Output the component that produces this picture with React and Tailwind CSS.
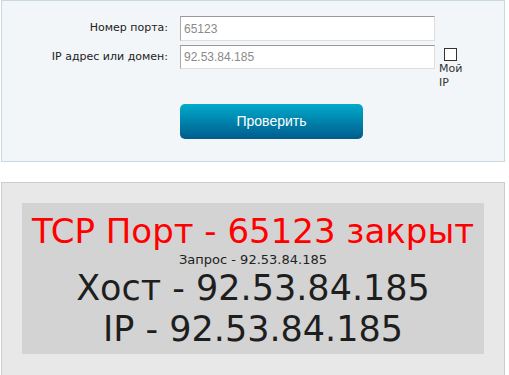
import React, { useState } from "react";

const Portcheck = () => {
  const [port, setPort] = useState("65123");
  const [host, setHost] = useState("92.53.84.185");
  const [myIp, setMyIp] = useState(false);

  return (
    <div className="w-[509px] h-[375px] overflow-hidden bg-white font-['DejaVu_Sans',sans-serif]">
      <div className="ml-[1px] w-[504px] h-[162px] border border-[#c8d8de] bg-[#f2f6f8] pt-[15px]">
        <div className="flex items-start">
          <p className="w-[166px] pt-[4px] text-right text-[11px] text-[#222]">Номер порта:</p>
          <input
            value={port}
            onChange={(e) => setPort(e.target.value)}
            className="ml-[12px] w-[255px] h-[25px] bg-white border border-[#ddd] border-t-[#999] border-l-[#aaa] px-[3px] text-[12px] text-[#8a8a8a] font-['Liberation_Sans',sans-serif] outline-none"
          />
        </div>
        <div className="flex items-start mt-[4px]">
          <p className="w-[166px] pt-[4px] text-right text-[11px] text-[#222]">IP адрес или домен:</p>
          <input
            value={host}
            onChange={(e) => setHost(e.target.value)}
            className="ml-[12px] w-[255px] h-[24px] bg-white border border-[#ddd] border-t-[#999] border-l-[#aaa] px-[3px] text-[12px] text-[#8a8a8a] font-['Liberation_Sans',sans-serif] outline-none"
          />
          <div className="ml-[4px] w-[30px] flex flex-col">
            <button
              onClick={() => setMyIp(!myIp)}
              className="mt-[3px] ml-[5px] w-[13px] h-[13px] border border-[#333] bg-white"
            >
              {myIp && <span className="block w-full h-full bg-[#333]" />}
            </button>
            <p className="mt-[1px] text-[11px] leading-[14px] text-[#333]">
              Мой
              <br />
              IP
            </p>
          </div>
        </div>
        <div className="mt-[14px] ml-[178px]">
          <button className="w-[183px] h-[35px] rounded-[5px] bg-gradient-to-b from-[#00abcb] to-[#005c8d] text-white text-[14px] font-['Liberation_Sans',sans-serif]">
            Проверить
          </button>
        </div>
      </div>

      <div className="mt-[20px] ml-[1px] w-[504px] h-[200px] border border-[#ccc] bg-[#e8e8e8] px-[20px] pt-[20px]">
        <div className="bg-[#d3d3d3] h-[151px] flex flex-col items-center pt-[8px]">
          <p className="text-[34px] leading-[40px] text-[#ff0000] whitespace-nowrap">TCP Порт - 65123 закрыт</p>
          <p className="text-[13px] leading-[17px] text-[#222]">Запрос - 92.53.84.185</p>
          <p className="text-[35px] leading-[41px] text-[#1e1e1e]">Хост - 92.53.84.185</p>
          <p className="text-[35px] leading-[41px] text-[#1e1e1e]">IP - 92.53.84.185</p>
        </div>
      </div>
    </div>
  );
};

export default Portcheck;
